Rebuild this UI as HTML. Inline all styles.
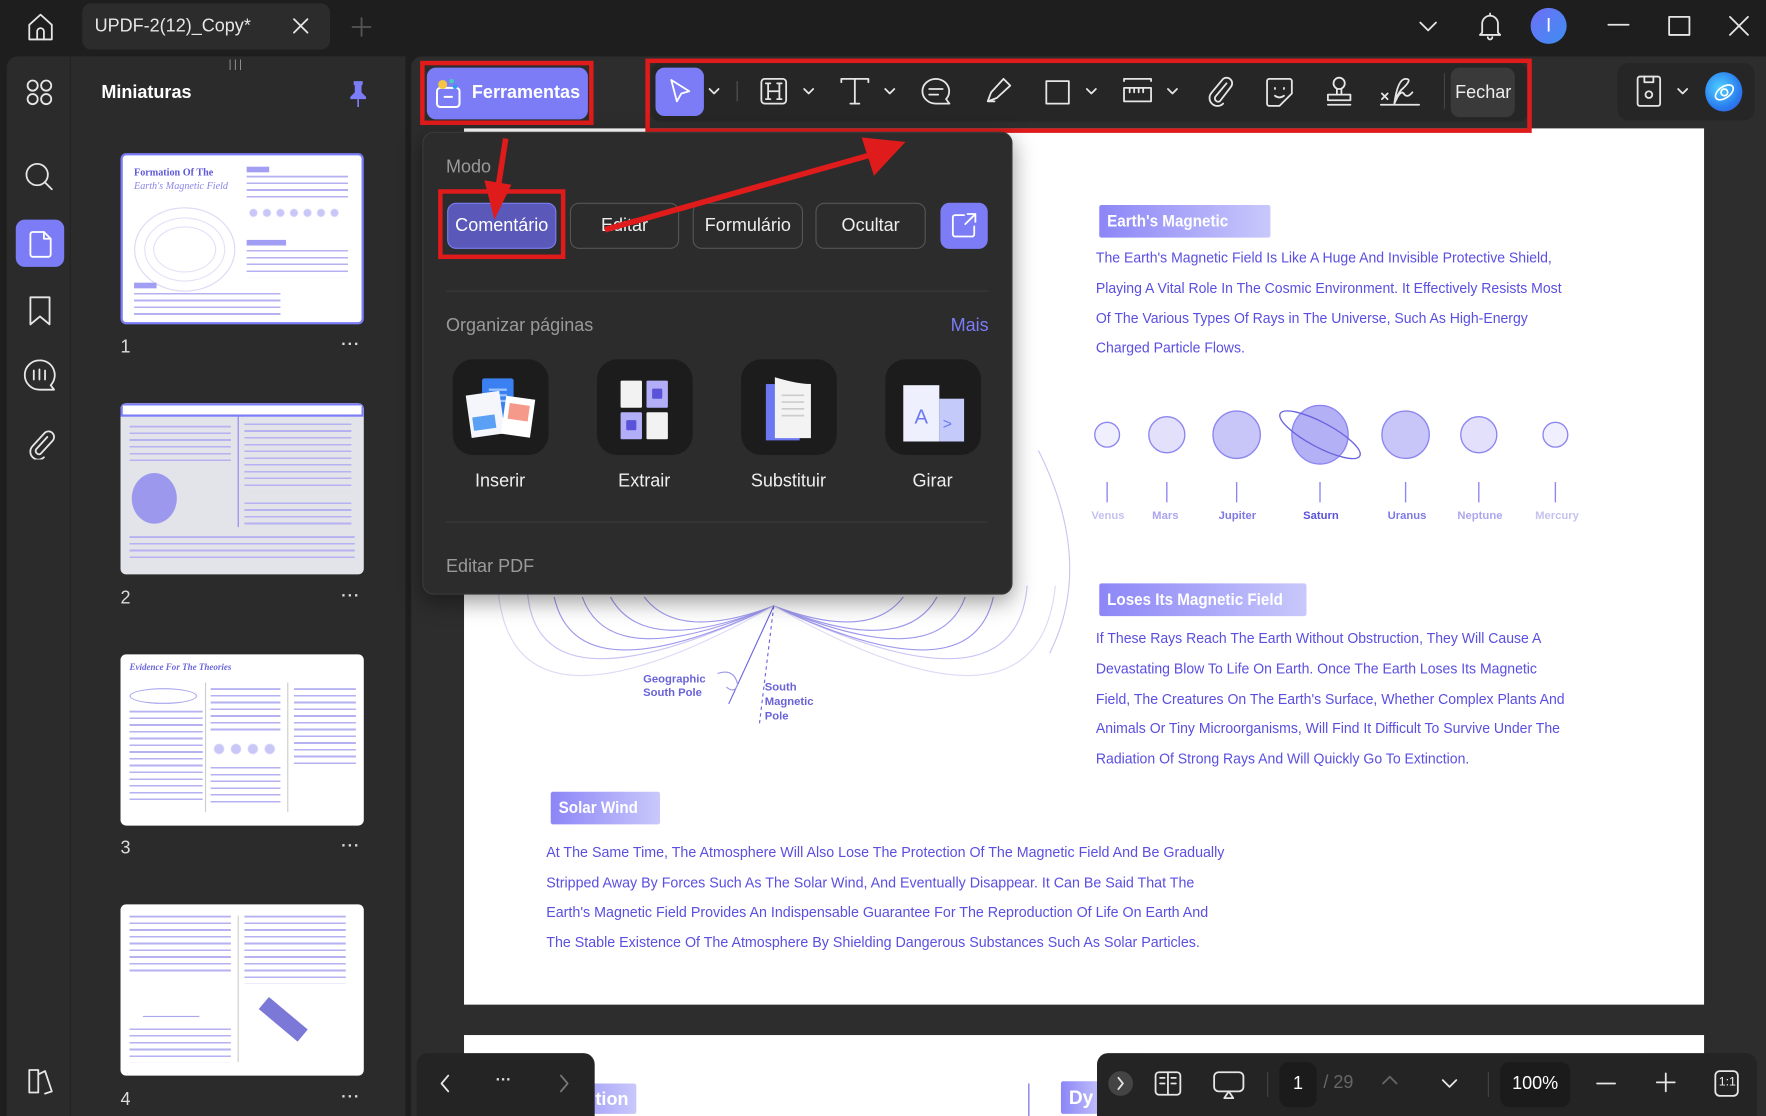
<!DOCTYPE html>
<html><head><meta charset="utf-8">
<style>
*{margin:0;padding:0;box-sizing:border-box}
html,body{width:1766px;height:1116px;overflow:hidden;background:#1e1e1e;font-family:"Liberation Sans",sans-serif}
#w{position:absolute;left:0;top:0;width:1568px;height:991px;transform:scale(1.12628);transform-origin:0 0;background:#1e1e1e}
.a{position:absolute}
.ic{position:absolute;fill:none;stroke:#e6e6e6;stroke-width:1.6;stroke-linecap:round;stroke-linejoin:round}
.pt{position:absolute;color:#5a4fe0;font-size:13.2px;white-space:nowrap;transform:scaleX(.945);transform-origin:0 0}
.tag{position:absolute;color:#fff;font-weight:bold;font-size:15px;padding:2px 7px;border-radius:2px;background:linear-gradient(90deg,#8c86f7,#c9c8fb);height:29px;line-height:25px;white-space:nowrap;overflow:hidden}
.tag span{display:inline-block;transform:scaleX(.9);transform-origin:0 0}
.btn{position:absolute;top:180px;height:41px;border:1.5px solid #555;border-radius:8px;color:#eee;font-size:16px;text-align:center;line-height:40px}
.tile{position:absolute;top:319px;width:85px;height:85px;border-radius:18px;background:#1c1c1c}
.tl{position:absolute;top:419px;color:#eee;font-size:16px;width:120px;text-align:center}
.th{position:absolute;left:107px;width:216px;height:152px;background:#fff;border-radius:5px;overflow:hidden}
.lines{position:absolute;background:repeating-linear-gradient(180deg,#b6b2f2 0 1.5px,transparent 1.5px 6px)}
.num{position:absolute;left:107px;color:#ddd;font-size:16px}
.dots{position:absolute;left:303px;color:#ddd;font-size:14px;font-weight:bold;letter-spacing:1px}
</style></head><body><div id="w">

<svg class="ic" style="left:22px;top:10px" width="28" height="28" viewBox="0 0 28 28"><path d="M4 12L14 3l10 9v13H4z"/><path d="M11 25v-7a3 3 0 016 0v7"/></svg>
<div class="a" style="left:73px;top:3px;width:220px;height:41px;background:#2c2c2c;border-radius:8px"></div>
<div class="a" style="left:84px;top:15px;color:#e6e6e6;font-size:16px">UPDF-2(12)_Copy*</div>
<svg class="ic" style="left:259px;top:15px" width="16" height="16"><path d="M2 2l12 12M14 2L2 14"/></svg>
<svg class="ic" style="left:312px;top:15px;stroke:#555" width="18" height="18"><path d="M9 1v16M1 9h16"/></svg>
<svg class="ic" style="left:1259px;top:18px" width="18" height="12"><path d="M2 2l7 7 7-7"/></svg>
<svg class="ic" style="left:1311px;top:9px" width="24" height="28"><path d="M5 20V12a7 7 0 0114 0v8l2 2H3z"/><path d="M10 24a2 2 0 004 0M12 3v2"/></svg>
<div class="a" style="left:1359px;top:7px;width:32px;height:32px;border-radius:50%;background:linear-gradient(135deg,#6f6ff7,#3d8ef0);color:#fff;text-align:center;line-height:32px;font-size:17px">I</div>
<svg class="ic" style="left:1427px;top:20px" width="20" height="4"><path d="M1 2h18"/></svg>
<svg class="ic" style="left:1481px;top:14px" width="20" height="20"><rect x="1" y="1" width="18" height="16"/></svg>
<svg class="ic" style="left:1535px;top:14px" width="18" height="18"><path d="M1 1l16 16M17 1L1 17"/></svg>

<div class="a" style="left:6px;top:50px;width:56px;height:941px;background:#2b2b2b;border-radius:10px 0 0 0"></div>
<svg class="ic" style="left:23px;top:70px" width="24" height="24"><circle cx="6" cy="6" r="4.5"/><circle cx="18" cy="6" r="4.5"/><circle cx="6" cy="18" r="4.5"/><circle cx="18" cy="18" r="4.5"/></svg>
<svg class="ic" style="left:21px;top:143px" width="28" height="28"><circle cx="12" cy="12" r="9.5"/><path d="M19 19l6 6"/></svg>
<div class="a" style="left:14px;top:195px;width:43px;height:42px;border-radius:8px;background:#7b7cf6"></div>
<svg class="ic" style="left:24px;top:204px;stroke:#fff" width="24" height="26"><path d="M3 4a2 2 0 012-2h10l6 6v14a2 2 0 01-2 2H5a2 2 0 01-2-2z"/><path d="M15 2v6h6"/></svg>
<svg class="ic" style="left:24px;top:262px" width="24" height="28"><path d="M3 2h17v24l-8.5-7L3 26z"/></svg>
<svg class="ic" style="left:20px;top:318px" width="30" height="30"><path d="M15 2a13 13 0 100 26h13l-3-4a13 13 0 00-10-22z"/><path d="M10 11v8M15 10v9M20 11v8"/></svg>
<svg class="ic" style="left:22px;top:378px" width="28" height="30"><path d="M20 10L10 21a3 3 0 004 4l11-12a5 5 0 00-7-7L7 18a7 7 0 0010 10"/></svg>
<svg class="ic" style="left:22px;top:946px" width="28" height="28"><path d="M4 4h8v20H4zM12 8l6-3 6 18-6 2"/></svg>

<div class="a" style="left:62px;top:50px;width:298px;height:941px;background:#2b2b2b;border-left:1px solid #242424"></div>
<div class="a" style="left:203px;top:52px;color:#999;font-size:10px;letter-spacing:2px">|||</div>
<div class="a" style="left:90px;top:74px;color:#fff;font-size:16px;font-weight:bold">Miniaturas</div>
<svg class="a" style="left:309px;top:70px" width="18" height="26"><path d="M5 2h8v3l-1 1v6l4 4v2H2v-2l4-4V6L5 5z" fill="#7b7cf6"/><path d="M9 18v7" stroke="#7b7cf6" stroke-width="1.5"/></svg>

<div class="th" style="top:136px;border:2.5px solid #7b7cf6">
 <div class="a" style="left:10px;top:10px;color:#5e58d8;font:bold 9px 'Liberation Serif',serif">Formation Of The</div>
 <div class="a" style="left:10px;top:22px;color:#8a86e8;font:italic 9px 'Liberation Serif',serif">Earth's Magnetic Field</div>
 <div class="a" style="left:10px;top:46px;width:90px;height:75px;border-radius:50%;border:1px solid #dcdaf5;box-shadow:inset 0 0 0 8px #fff,inset 0 0 0 9px #e3e1f7,inset 0 0 0 16px #fff,inset 0 0 0 17px #e3e1f7"></div>
 <div class="a" style="left:110px;top:10px;width:20px;height:5px;background:#a29ef3"></div>
 <div class="lines" style="left:110px;top:18px;width:90px;height:22px"></div>
 <div class="a" style="left:110px;top:46px;width:85px;height:10px;background:radial-gradient(circle,#c9c7f8 3px,transparent 4px) 0 0/12px 10px"></div>
 <div class="a" style="left:110px;top:75px;width:35px;height:5px;background:#a29ef3"></div>
 <div class="lines" style="left:110px;top:84px;width:90px;height:24px"></div>
 <div class="a" style="left:10px;top:113px;width:20px;height:5px;background:#a29ef3"></div>
 <div class="lines" style="left:10px;top:122px;width:130px;height:20px"></div>
</div>
<div class="num" style="top:300px">1</div><div class="dots" style="top:297px">···</div>

<div class="th" style="top:358px;background:#e3e3ea">
 <div class="a" style="left:0;top:0;width:216px;height:12px;background:#fff;border:2px solid #7b7cf6"></div>
 <div class="lines" style="left:8px;top:20px;width:90px;height:36px"></div>
 <div class="a" style="left:10px;top:62px;width:40px;height:45px;border-radius:50%;background:#9c98ee"></div>
 <div class="a" style="left:104px;top:10px;width:1px;height:100px;background:#8c86f0"></div>
 <div class="lines" style="left:110px;top:18px;width:95px;height:60px"></div>
 <div class="lines" style="left:110px;top:88px;width:95px;height:20px"></div>
 <div class="lines" style="left:8px;top:118px;width:200px;height:20px"></div>
</div>
<div class="num" style="top:523px">2</div><div class="dots" style="top:520px">···</div>

<div class="th" style="top:581px">
 <div class="a" style="left:8px;top:7px;color:#6b66dc;font:italic bold 8px 'Liberation Serif',serif">Evidence For The Theories</div>
 <div class="a" style="left:8px;top:30px;width:60px;height:14px;border-radius:50%;border:1px solid #aaa6ef"></div>
 <div class="lines" style="left:8px;top:50px;width:65px;height:80px"></div>
 <div class="a" style="left:75px;top:25px;width:1px;height:115px;background:#ccc"></div>
 <div class="a" style="left:148px;top:25px;width:1px;height:115px;background:#ccc"></div>
 <div class="a" style="left:80px;top:78px;width:60px;height:12px;background:radial-gradient(circle,#c9c7f8 4px,transparent 5px) 0 0/15px 12px"></div>
 <div class="lines" style="left:80px;top:30px;width:62px;height:40px"></div>
 <div class="lines" style="left:80px;top:100px;width:62px;height:36px"></div>
 <div class="lines" style="left:154px;top:30px;width:55px;height:70px"></div>
</div>
<div class="num" style="top:745px">3</div><div class="dots" style="top:742px">···</div>

<div class="th" style="top:803px">
 <div class="lines" style="left:8px;top:10px;width:90px;height:50px"></div>
 <div class="a" style="left:104px;top:10px;width:1px;height:130px;background:#ccc"></div>
 <div class="lines" style="left:110px;top:10px;width:90px;height:60px"></div>
 <div class="a" style="left:20px;top:70px;width:50px;height:30px;border-bottom:1px solid #aaa6ef"></div>
 <div class="a" style="left:122px;top:95px;width:45px;height:14px;background:#7b78d8;transform:rotate(40deg)"></div>
 <div class="lines" style="left:8px;top:110px;width:90px;height:30px"></div>
</div>
<div class="num" style="top:968px">4</div><div class="dots" style="top:965px">···</div>

<div class="a" style="left:365px;top:50px;width:1203px;height:941px;background:#2d2d2d;border-radius:10px 0 0 0"></div>
<div class="a" style="left:412px;top:114px;width:1101px;height:778px;background:#fff"></div>
<div class="a" style="left:412px;top:919px;width:1101px;height:72px;background:#fff"></div>

<svg class="a" style="left:412px;top:380px" width="560" height="300" viewBox="0 0 560 300" fill="none" stroke="#9d98ec" stroke-width="1">
 <path d="M56 140 Q60 260 275 158 Q490 260 500 140" stroke="#c8c5f3"/>
 <path d="M80 150 Q100 240 275 158 Q450 240 470 150"/>
 <path d="M105 150 Q130 220 275 158 Q420 220 445 150"/>
 <path d="M130 150 Q160 205 275 158 Q390 205 420 150"/>
 <path d="M160 150 Q190 190 275 158 Q360 190 390 150"/>
 <path d="M30 140 Q40 290 275 158 Q510 290 525 140" stroke="#dcdaf5"/>
 <path d="M510 20 Q560 120 520 200" stroke="#c8c5f3"/>
 <path d="M275 158 L235 245" stroke="#6a63e0"/>
 <path d="M275 158 L262 265" stroke="#6a63e0" stroke-dasharray="3 3"/>
 <path d="M225 218 q15 -5 18 10 q-3 8 -10 2"/>
</svg>
<div class="a" style="left:571px;top:598px;color:#6a63d8;font-size:10px;font-weight:bold;line-height:12px">Geographic<br>South Pole</div>
<div class="a" style="left:679px;top:604px;color:#6a63d8;font-size:10px;font-weight:bold;line-height:13px">South<br>Magnetic<br>Pole</div>

<div class="tag" style="left:976px;top:182px;width:152px"><span>Earth's Magnetic</span></div>
<div class="pt" style="left:973px;top:221px">The Earth's Magnetic Field Is Like A Huge And Invisible Protective Shield,</div>
<div class="pt" style="left:973px;top:248px">Playing A Vital Role In The Cosmic Environment. It Effectively Resists Most</div>
<div class="pt" style="left:973px;top:275px">Of The Various Types Of Rays in The Universe, Such As High-Energy</div>
<div class="pt" style="left:973px;top:301px">Charged Particle Flows.</div>

<svg class="a" style="left:960px;top:350px" width="460" height="120" viewBox="0 0 460 120">
 <g stroke="#8c86f0" stroke-width="1.2">
 <ellipse cx="23" cy="36" rx="11" ry="11" fill="#f0effd"/>
 <ellipse cx="76" cy="36" rx="16" ry="16" fill="#e2e0fb"/>
 <ellipse cx="138" cy="36" rx="21" ry="21" fill="#c8c5f8"/>
 <ellipse cx="212" cy="36" rx="25" ry="26" fill="#b3b0f5"/>
 <ellipse cx="212" cy="36" rx="40" ry="11" fill="none" transform="rotate(28 212 36)" stroke="#6a63e0"/>
 <ellipse cx="288" cy="36" rx="21" ry="21" fill="#c8c5f8"/>
 <ellipse cx="353" cy="36" rx="16" ry="16" fill="#e2e0fb"/>
 <ellipse cx="421" cy="36" rx="11" ry="11" fill="#f0effd"/>
 <path d="M23 78v18M76 78v18M138 78v18M212 78v18M288 78v18M353 78v18M421 78v18" stroke="#8c86f0"/>
 </g>
</svg>
<div class="a" style="left:968px;top:453px;width:460px;height:14px;font-size:10px;font-weight:bold">
 <span class="a" style="left:1px;color:#c4c2ee">Venus</span><span class="a" style="left:55px;color:#aaa6ee">Mars</span><span class="a" style="left:114px;color:#7f79e4">Jupiter</span><span class="a" style="left:189px;color:#5a52d8">Saturn</span><span class="a" style="left:264px;color:#7f79e4">Uranus</span><span class="a" style="left:326px;color:#aaa6ee">Neptune</span><span class="a" style="left:395px;color:#c4c2ee">Mercury</span>
</div>

<div class="tag" style="left:976px;top:518px;width:184px"><span>Loses Its Magnetic Field</span></div>
<div class="pt" style="left:973px;top:559px">If These Rays Reach The Earth Without Obstruction, They Will Cause A</div>
<div class="pt" style="left:973px;top:586px">Devastating Blow To Life On Earth. Once The Earth Loses Its Magnetic</div>
<div class="pt" style="left:973px;top:613px">Field, The Creatures On The Earth's Surface, Whether Complex Plants And</div>
<div class="pt" style="left:973px;top:639px">Animals Or Tiny Microorganisms, Will Find It Difficult To Survive Under The</div>
<div class="pt" style="left:973px;top:666px">Radiation Of Strong Rays And Will Quickly Go To Extinction.</div>

<div class="tag" style="left:489px;top:703px;width:97px"><span>Solar Wind</span></div>
<div class="pt" style="left:485px;top:749px;transform:scaleX(.96)">At The Same Time, The Atmosphere Will Also Lose The Protection Of The Magnetic Field And Be Gradually</div>
<div class="pt" style="left:485px;top:776px;transform:scaleX(.96)">Stripped Away By Forces Such As The Solar Wind, And Eventually Disappear. It Can Be Said That The</div>
<div class="pt" style="left:485px;top:802px;transform:scaleX(.96)">Earth's Magnetic Field Provides An Indispensable Guarantee For The Reproduction Of Life On Earth And</div>
<div class="pt" style="left:485px;top:829px;transform:scaleX(.96)">The Stable Existence Of The Atmosphere By Shielding Dangerous Substances Such As Solar Particles.</div>

<div class="tag" style="left:485px;top:962px;width:80px;height:27px;font-size:16px;text-align:right">tion</div>
<div class="a" style="left:913px;top:962px;width:1px;height:29px;background:#6a63e0"></div>
<div class="tag" style="left:942px;top:960px;width:40px;height:29px;font-size:17px">Dy</div>

<div class="a" style="left:379px;top:60px;width:143px;height:46px;background:#7b7cf6;border-radius:8px"></div>
<svg class="a" style="left:385px;top:68px" width="28" height="30"><rect x="3" y="10" width="20" height="17" rx="3" fill="none" stroke="#fff" stroke-width="1.8"/><path d="M9 18h8" stroke="#fff" stroke-width="1.8"/><circle cx="8" cy="7" r="4" fill="#f5c542"/><circle cx="16" cy="4" r="2" fill="#3fd0c0"/><circle cx="19" cy="9" r="2" fill="#2f9bf0"/></svg>
<div class="a" style="left:419px;top:74px;color:#fff;font-weight:bold;font-size:16px">Ferramentas</div>
<div class="a" style="left:373px;top:54px;width:154px;height:57px;border:4px solid #e01b1b"></div>

<div class="a" style="left:578px;top:56px;width:778px;height:52px;background:#262626;border-radius:8px"></div>
<div class="a" style="left:582px;top:60px;width:43px;height:43px;background:#7b7cf6;border-radius:8px"></div>
<svg class="ic" style="left:592px;top:68px;stroke:#fff" width="24" height="26"><path d="M4 3l16 10-7 2-4 7z"/></svg>
<svg class="ic" style="left:628px;top:77px" width="12" height="8"><path d="M2 2l4 4 4-4"/></svg>
<div class="a" style="left:654px;top:72px;width:1px;height:18px;background:#555"></div>
<svg class="ic" style="left:674px;top:68px" width="26" height="26"><rect x="2" y="2" width="22" height="22" rx="3"/><path d="M8 6v14M18 6v14M8 13h10M6 6h4M16 6h4M6 20h4M16 20h4"/></svg>
<svg class="ic" style="left:712px;top:77px" width="12" height="8"><path d="M2 2l4 4 4-4"/></svg>
<svg class="ic" style="left:745px;top:68px" width="28" height="26"><path d="M2 5V2h24v3M14 2v22M10 24h8"/></svg>
<svg class="ic" style="left:784px;top:77px" width="12" height="8"><path d="M2 2l4 4 4-4"/></svg>
<svg class="ic" style="left:817px;top:68px" width="28" height="28"><path d="M14 2a12 11 0 100 22h12l-3-4a12 11 0 00-9-18z"/><path d="M8 11h12M8 16h8"/></svg>
<svg class="ic" style="left:872px;top:67px" width="28" height="28"><path d="M5 23l3-8 11-12 6 6-12 11zM5 23h6"/></svg>
<svg class="ic" style="left:927px;top:70px" width="24" height="24"><rect x="2" y="2" width="20" height="20"/></svg>
<svg class="ic" style="left:963px;top:77px" width="12" height="8"><path d="M2 2l4 4 4-4"/></svg>
<svg class="ic" style="left:996px;top:68px" width="28" height="26"><path d="M2 2h24M2 2v2M26 2v2M2 10h24v12H2z M7 10v4M11 10v4M15 10v4M19 10v4"/></svg>
<svg class="ic" style="left:1035px;top:77px" width="12" height="8"><path d="M2 2l4 4 4-4"/></svg>
<svg class="ic" style="left:1069px;top:66px" width="28" height="30"><path d="M20 8L10 20a3 3 0 004 4L24 11a5 5 0 00-7-7L7 16a7 7 0 0010 10"/></svg>
<svg class="ic" style="left:1122px;top:67px" width="28" height="30"><path d="M5 3h18a2 2 0 012 2v11l-11 11H5a2 2 0 01-2-2V5a2 2 0 012-2z"/><path d="M10 11v1M18 11v1M10 18q4 3 8 0"/></svg>
<svg class="ic" style="left:1175px;top:66px" width="28" height="30"><circle cx="14" cy="8" r="5"/><path d="M12 13v5M16 13v5M4 18h20v5H4zM4 27h20"/></svg>
<svg class="ic" style="left:1224px;top:66px" width="38" height="30"><path d="M3 17l5 5M8 17l-5 5M2 27h34M14 26q3-22 10-22t-4 10q-6 8-6 12q6-14 9-8q3 3 7-2"/></svg>
<div class="a" style="left:1282px;top:65px;width:1px;height:32px;background:#444"></div>
<div class="a" style="left:1288px;top:60px;width:57px;height:44px;background:#3a3a3a;border-radius:8px;overflow:hidden"><div class="a" style="left:4px;top:14px;color:#eee;font-size:16px">Fechar</div></div>
<div class="a" style="left:573px;top:52px;width:787px;height:66px;border:4px solid #e01b1b"></div>

<div class="a" style="left:1436px;top:56px;width:122px;height:51px;background:#262626;border-radius:10px"></div>
<svg class="ic" style="left:1451px;top:66px" width="26" height="30"><path d="M5 2h16a2 2 0 012 2v22a2 2 0 01-2 2H5a2 2 0 01-2-2V4a2 2 0 012-2z"/><path d="M9 2v5h8V2"/><circle cx="13" cy="18" r="3"/></svg>
<svg class="ic" style="left:1488px;top:77px" width="12" height="8"><path d="M2 2l4 4 4-4"/></svg>
<div class="a" style="left:1514px;top:64px;width:33px;height:35px;border-radius:50%;background:radial-gradient(circle at 40% 40%,#4fd0ff,#2a7ef0 60%,#3b4fd8)"></div>
<svg class="a" style="left:1520px;top:71px" width="22" height="22" fill="none" stroke="#fff" stroke-width="1.5"><ellipse cx="11" cy="11" rx="9" ry="5" transform="rotate(-35 11 11)"/><circle cx="11" cy="11" r="3"/></svg>

<div class="a" style="left:375px;top:117px;width:524px;height:411px;background:#2c2c2c;border:1px solid #3a3a3a;border-radius:10px;box-shadow:0 6px 20px rgba(0,0,0,.4)"></div>
<div class="a" style="left:396px;top:140px;color:#9a9a9a;font-size:16px">Modo</div>
<div class="btn" style="left:397px;width:97px;background:#5a58b8;border-color:#7b7cf6;color:#fff">Comentário</div>
<div class="btn" style="left:506px;width:97px">Editar</div>
<div class="btn" style="left:615px;width:98px">Formulário</div>
<div class="btn" style="left:724px;width:98px">Ocultar</div>
<div class="a" style="left:835px;top:180px;width:42px;height:41px;background:#7b7cf6;border-radius:8px"></div>
<svg class="ic" style="left:843px;top:187px;stroke:#fff" width="26" height="26"><path d="M13 4H5a2 2 0 00-2 2v15a2 2 0 002 2h15a2 2 0 002-2v-7M16 3h7v7M23 3l-9 9"/></svg>
<div class="a" style="left:389px;top:168px;width:113px;height:62px;border:4px solid #e01b1b"></div>
<div class="a" style="left:396px;top:258px;width:481px;height:1px;background:#3a3a3a"></div>
<div class="a" style="left:396px;top:281px;color:#9a9a9a;font-size:16px">Organizar páginas</div>
<div class="a" style="left:844px;top:281px;color:#7b7cf6;font-size:16px">Mais</div>

<div class="tile" style="left:402px"><svg width="85" height="85"><rect x="26" y="17" width="28" height="40" rx="2" fill="#3a80f0"/><rect x="32" y="26" width="16" height="2" fill="#9cc4ff"/><rect x="32" y="31" width="16" height="2" fill="#9cc4ff"/><rect x="32" y="36" width="16" height="2" fill="#9cc4ff"/><rect x="14" y="30" width="30" height="38" fill="#f4f6fb" transform="rotate(-8 29 49)"/><rect x="17" y="50" width="20" height="12" fill="#5aa0f5" transform="rotate(-8 29 49)"/><rect x="45" y="34" width="26" height="34" fill="#fff" transform="rotate(8 58 51)"/><rect x="49" y="40" width="18" height="14" fill="#f59a8a" transform="rotate(8 58 51)"/></svg></div>
<div class="tile" style="left:530px"><svg width="85" height="85"><rect x="21" y="19" width="19" height="24" rx="1" fill="#f2f2f2"/><rect x="44" y="19" width="19" height="24" rx="1" fill="#b3aef8"/><rect x="21" y="47" width="19" height="24" rx="1" fill="#b3aef8"/><rect x="44" y="47" width="19" height="24" rx="1" fill="#f2f2f2"/><rect x="49" y="26" width="9" height="9" rx="1" fill="#5a52d8"/><rect x="26" y="54" width="9" height="9" rx="1" fill="#5a52d8"/></svg></div>
<div class="tile" style="left:658px"><svg width="85" height="85"><rect x="22" y="22" width="30" height="50" fill="#6c78f0"/><path d="M30 16q20 6 32 6v48H30z" fill="#f3f3f3"/><path d="M36 32h20M36 38h20M36 44h20M36 50h20" stroke="#ccc" stroke-width="1.5"/></svg></div>
<div class="tile" style="left:786px"><svg width="85" height="85"><rect x="16" y="23" width="32" height="50" fill="#eef0fe"/><rect x="48" y="35" width="22" height="38" fill="#c4cbfb"/><text x="26" y="57" font-family="Liberation Sans" font-size="18" fill="#6c78f0">A</text><text x="51" y="62" font-family="Liberation Sans" font-size="14" fill="#6c78f0">&gt;</text></svg></div>
<div class="tl" style="left:384px">Inserir</div>
<div class="tl" style="left:512px">Extrair</div>
<div class="tl" style="left:640px">Substituir</div>
<div class="tl" style="left:768px">Girar</div>
<div class="a" style="left:396px;top:463px;width:481px;height:1px;background:#3a3a3a"></div>
<div class="a" style="left:396px;top:495px;color:#9a9a9a;font-size:16px">Editar PDF</div>

<svg class="a" style="left:0;top:0" width="1568" height="300" viewBox="0 0 1568 300">
 <path d="M449 123 L442 168" stroke="#e01b1b" stroke-width="5"/>
 <path d="M430 160 L454 164 L439 195 Z" fill="#e01b1b"/>
 <path d="M537 204 L775 137" stroke="#e01b1b" stroke-width="5"/>
 <path d="M765 122 L804 126 L776 156 Z" fill="#e01b1b"/>
</svg>

<div class="a" style="left:370px;top:935px;width:158px;height:56px;background:#242424;border-radius:10px 10px 0 0"></div>
<svg class="ic" style="left:389px;top:953px" width="12" height="18"><path d="M9 2L3 9l6 7"/></svg>
<div class="a" style="left:440px;top:950px;color:#ddd;font-size:14px;font-weight:bold">···</div>
<svg class="ic" style="left:495px;top:953px;stroke:#777" width="12" height="18"><path d="M3 2l6 7-6 7"/></svg>

<div class="a" style="left:974px;top:935px;width:586px;height:56px;background:#242424;border-radius:10px 10px 0 0"></div>
<div class="a" style="left:984px;top:951px;width:22px;height:22px;border-radius:50%;background:#444"></div>
<svg class="ic" style="left:990px;top:955px" width="10" height="14"><path d="M3 2l4 5-4 5"/></svg>
<svg class="ic" style="left:1024px;top:950px" width="26" height="24"><rect x="2" y="2" width="22" height="20" rx="3"/><path d="M13 2v20M6 7h4M6 12h4M16 7h4M16 12h4"/></svg>
<svg class="ic" style="left:1076px;top:949px" width="30" height="28"><rect x="2" y="3" width="26" height="17" rx="4"/><path d="M15 20l-4 6h8z"/></svg>
<div class="a" style="left:1125px;top:952px;width:1px;height:22px;background:#444"></div>
<div class="a" style="left:1136px;top:943px;width:33px;height:40px;background:#1b1b1b;border-radius:8px;color:#fff;text-align:center;line-height:40px;font-size:16px">1</div>
<div class="a" style="left:1175px;top:953px;color:#666;font-size:16px">/ 29</div>
<svg class="ic" style="left:1226px;top:954px;stroke:#666" width="16" height="10"><path d="M2 8l6-6 6 6"/></svg>
<svg class="ic" style="left:1279px;top:957px" width="16" height="10"><path d="M2 2l6 6 6-6"/></svg>
<div class="a" style="left:1321px;top:952px;width:1px;height:22px;background:#444"></div>
<div class="a" style="left:1332px;top:943px;width:62px;height:40px;background:#1b1b1b;border-radius:8px;color:#fff;text-align:center;line-height:40px;font-size:16px">100%</div>
<svg class="ic" style="left:1417px;top:960px" width="18" height="4"><path d="M1 2h16"/></svg>
<svg class="ic" style="left:1470px;top:952px" width="18" height="18"><path d="M9 1v16M1 9h16"/></svg>
<svg class="ic" style="left:1521px;top:949px" width="24" height="26"><rect x="2" y="2" width="20" height="22" rx="4"/></svg>
<div class="a" style="left:1526px;top:955px;color:#eee;font-size:11px">1:1</div>

</div></body></html>
